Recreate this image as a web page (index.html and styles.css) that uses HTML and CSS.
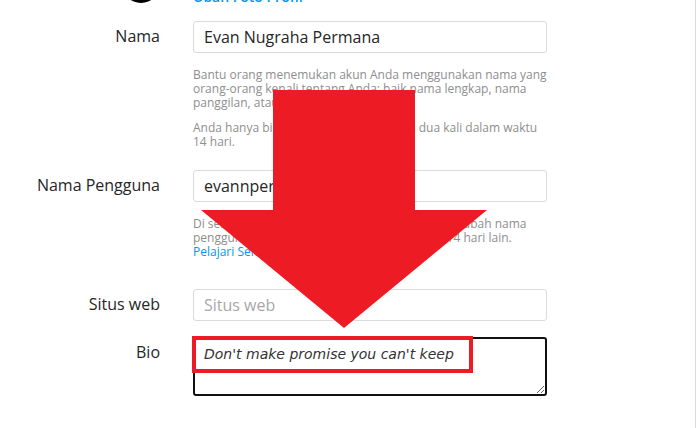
FILE: index.html
```html
<!DOCTYPE html>
<html lang="id">
<head>
  <meta charset="UTF-8" />
  <meta name="viewport" content="width=device-width, initial-scale=1.0" />
  <title>Edit Profil</title>
  <link rel="stylesheet" href="styles.css">
</head>
<body>
  <div class="pagina">
    <div class="editar">
      <div class="fila fila-foto">
        <div class="etiqueta"><div class="avatar"></div></div>
        <div class="campo">
          <div class="usuario">evannpermana</div>
          <a class="enlace-foto" href="#">Ubah Foto Profil</a>
        </div>
      </div>

      <div class="fila">
        <label class="etiqueta" for="nama">Nama</label>
        <div class="campo">
          <input class="entrada" type="text" id="nama" value="Evan Nugraha Permana" />
          <div class="ayuda">
            <p>Bantu orang menemukan akun Anda menggunakan nama yang orang-orang kenali tentang Anda: baik nama lengkap, nama panggilan, atau nama bisnis Anda.</p>
            <p>Anda hanya bisa mengubah nama Anda dua kali dalam waktu 14 hari.</p>
          </div>
        </div>
      </div>

      <div class="fila fila-usuario">
        <label class="etiqueta" for="pengguna">Nama Pengguna</label>
        <div class="campo">
          <input class="entrada" type="text" id="pengguna" value="evannpermana" />
          <div class="ayuda">
            <p>Di sebagian besar kasus, Anda akan dapat mengubah nama pengguna kembali ke evannpermana selama 14 hari lain. <a href="#">Pelajari Selengkapnya</a></p>
          </div>
        </div>
      </div>

      <div class="fila">
        <label class="etiqueta" for="situs">Situs web</label>
        <div class="campo">
          <input class="entrada" type="text" id="situs" placeholder="Situs web" />
        </div>
      </div>

      <div class="fila">
        <label class="etiqueta" for="bio">Bio</label>
        <div class="campo">
          <textarea class="bio" id="bio">Don't make promise you can't keep</textarea>
        </div>
      </div>
    </div>

    <!-- marcas rojas encima -->
    <div class="recuadro"></div>
    <svg class="flecha" viewBox="0 0 696 428" width="696" height="428">
      <polygon points="273,90 415,90 415,210 487,210 344,328 201,210 273,210" fill="#ed1c24" />
    </svg>
  </div>
</body>
</html>
```

FILE: styles.css
```css
body {
  margin: 0;
  font-family: "Open Sans", "Noto Sans", Arial, sans-serif;
  color: #262626;
  background: #fff;
}

.pagina {
  position: relative;
  width: 696px;
  height: 428px;
  box-sizing: border-box;
  border-right: 1px solid #dbdbdb;
  overflow: hidden;
}

.editar {
  margin-top: -35px;
}

.fila {
  display: grid;
  grid-template-columns: 160px 354px;
  column-gap: 33px;
  margin-bottom: 16px;
}

.fila-foto {
  margin-bottom: 15px;
}

.fila-usuario {
  margin-bottom: 25px;
}

.etiqueta {
  text-align: right;
  font-size: 16px;
  font-weight: 500;
  line-height: 30px;
}

.avatar {
  width: 38px;
  height: 38px;
  border-radius: 50%;
  background: #000;
  margin-left: auto;
}

.usuario {
  font-size: 20px;
  line-height: 23px;
}

.enlace-foto {
  display: block;
  color: #0095f6;
  font-size: 14px;
  font-weight: 600;
  line-height: 18px;
  text-decoration: none;
}

.entrada {
  display: block;
  width: 100%;
  height: 32px;
  box-sizing: border-box;
  border: 1px solid #dbdbdb;
  border-radius: 3px;
  padding: 0 10px;
  font-family: inherit;
  font-size: 16px;
  color: #262626;
  background: #fff;
}

.entrada::placeholder {
  color: #a8a8a8;
}

.ayuda {
  margin-top: 15px;
  margin-bottom: 5px;
  font-size: 12px;
  line-height: 14px;
  color: #8e8e8e;
}

.ayuda p {
  margin: 0;
}

.ayuda p + p {
  margin-top: 11px;
}

.ayuda a {
  color: #0095f6;
  text-decoration: none;
}

.bio {
  display: block;
  width: 100%;
  height: 59px;
  box-sizing: border-box;
  border: 2px solid #111;
  border-radius: 3px;
  padding: 6px 9px;
  font-family: "DejaVu Sans", Verdana, sans-serif;
  font-style: italic;
  font-size: 14px;
  line-height: 18px;
  color: #333;
  outline: none;
}

.recuadro {
  position: absolute;
  left: 192px;
  top: 336px;
  width: 281px;
  height: 37px;
  box-sizing: border-box;
  border: 4px solid #ed1c24;
}

.flecha {
  position: absolute;
  left: 0;
  top: 0;
  pointer-events: none;
}
```
